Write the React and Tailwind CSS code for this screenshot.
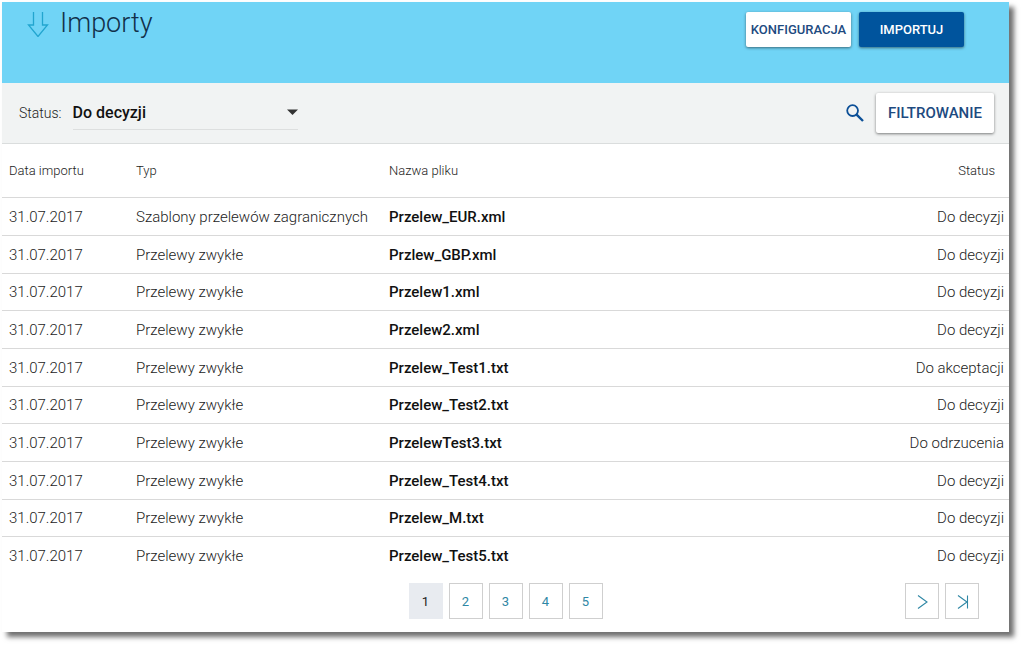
import React, { useState } from 'react';

const imports = [
  { date: '31.07.2017', type: 'Szablony przelewów zagranicznych', file: 'Przelew_EUR.xml', status: 'Do decyzji' },
  { date: '31.07.2017', type: 'Przelewy zwykłe', file: 'Przlew_GBP.xml', status: 'Do decyzji' },
  { date: '31.07.2017', type: 'Przelewy zwykłe', file: 'Przelew1.xml', status: 'Do decyzji' },
  { date: '31.07.2017', type: 'Przelewy zwykłe', file: 'Przelew2.xml', status: 'Do decyzji' },
  { date: '31.07.2017', type: 'Przelewy zwykłe', file: 'Przelew_Test1.txt', status: 'Do akceptacji' },
  { date: '31.07.2017', type: 'Przelewy zwykłe', file: 'Przelew_Test2.txt', status: 'Do decyzji' },
  { date: '31.07.2017', type: 'Przelewy zwykłe', file: 'PrzelewTest3.txt', status: 'Do odrzucenia' },
  { date: '31.07.2017', type: 'Przelewy zwykłe', file: 'Przelew_Test4.txt', status: 'Do decyzji' },
  { date: '31.07.2017', type: 'Przelewy zwykłe', file: 'Przelew_M.txt', status: 'Do decyzji' },
  { date: '31.07.2017', type: 'Przelewy zwykłe', file: 'Przelew_Test5.txt', status: 'Do decyzji' },
];

const pages = [1, 2, 3, 4, 5];

const PageButton = ({ active, children, ...props }) => (
  <button
    className={`flex h-9 w-[34px] items-center justify-center border pt-[2px] text-[13px] ${
      active ? 'border-[#e8ebf0] bg-[#e8ebf0] text-[#222]' : 'border-[#cfcfcf] bg-white text-[#2f87a5]'
    }`}
    {...props}
  >
    {children}
  </button>
);

const Header = () => (
  <header className="flex h-[81px] items-start justify-between bg-[#70d4f6] pr-[45px] pl-6">
    <div className="flex items-center gap-[10px] pt-[3px]">
      <svg className="h-7 w-6" viewBox="0 0 24 28" fill="none" stroke="#22a5cf" strokeWidth="1.3">
        <path d="M7.5 3v13H2.5L12 27.5 21.5 16H16.5V3" />
      </svg>
      <h1 className="text-[27px] leading-9 font-light text-[#12304a]">Importy</h1>
    </div>
    <div className="flex gap-2 pt-[10px]">
      <button className="h-[35px] w-[105px] rounded-xs bg-white text-[13px] font-medium text-[#1d4a80] shadow-[0_1px_3px_#00000080]">
        KONFIGURACJA
      </button>
      <button className="h-[35px] w-[105px] rounded-xs bg-[#00549d] text-[13px] font-medium text-white shadow-[0_1px_3px_#00000080]">
        IMPORTUJ
      </button>
    </div>
  </header>
);

const FilterBar = () => (
  <div className="flex h-[61px] items-center justify-between border-b border-[#dadddd] bg-[#f1f3f3] pr-[15px] pl-[17px]">
    <div className="flex items-center gap-[11px]">
      <label htmlFor="status" className="text-sm font-light text-[#222]">Status:</label>
      <div className="relative w-[225px] border-b border-[#dddfdf]">
        <select id="status" defaultValue="Do decyzji" className="h-8 w-full appearance-none bg-transparent text-base font-medium text-[#111]">
          <option>Do decyzji</option>
          <option>Do akceptacji</option>
          <option>Do odrzucenia</option>
        </select>
        <svg className="pointer-events-none absolute top-3 right-0 h-[6px] w-[11px]" viewBox="0 0 11 6" fill="#333">
          <path d="M0 0.5h11L5.5 6z" />
        </svg>
      </div>
    </div>
    <div className="flex items-center gap-3">
      <button aria-label="Szukaj">
        <svg className="h-[18px] w-[18px]" viewBox="0 0 18 18" fill="none" stroke="#0c4f97" strokeWidth="1.8">
          <circle cx="6.6" cy="6.6" r="5.4" />
          <path d="M10.6 10.6l6.4 6.4" strokeWidth="2.4" />
        </svg>
      </button>
      <button className="h-10 w-[118px] rounded-xs bg-white text-[15px] font-medium text-[#1d4a80] shadow-[0_1px_3px_#00000080]">
        FILTROWANIE
      </button>
    </div>
  </div>
);

const ImportsTable = () => (
  <table className="w-full table-fixed text-left text-[#1c1c1c]">
    <colgroup>
      <col className="w-[134px]" />
      <col className="w-[253px]" />
      <col />
      <col className="w-[160px]" />
    </colgroup>
    <thead>
      <tr className="h-[53px] border-b border-[#d9d9d9] text-[13px]">
        <th className="pl-[7px] font-light">Data importu</th>
        <th className="font-light">Typ</th>
        <th className="font-light">Nazwa pliku</th>
        <th className="pr-[14px] text-right font-light">Status</th>
      </tr>
    </thead>
    <tbody>
      {imports.map((item) => (
        <tr key={item.file} className="h-[38px] border-b border-[#d9d9d9] text-[15px] font-light last:border-0 nth-[3n]:h-[37px]">
          <td className="pt-[2px] pl-[7px]">{item.date}</td>
          <td className="pt-[2px] whitespace-nowrap">{item.type}</td>
          <td className="pt-[2px] font-medium text-[#111]">{item.file}</td>
          <td className="pt-[2px] pr-[5px] text-right">{item.status}</td>
        </tr>
      ))}
    </tbody>
  </table>
);

const Pagination = () => {
  const [page, setPage] = useState(1);

  return (
    <nav className="grid grid-cols-[1fr_auto_1fr] pt-[9px] pb-[13px]">
      <div />
      <div className="flex gap-[6px]">
        {pages.map((p) => (
          <PageButton key={p} active={p === page} onClick={() => setPage(p)}>
            {p}
          </PageButton>
        ))}
      </div>
      <div className="flex justify-end gap-[6px] pr-[30px]">
        <PageButton aria-label="Następna" onClick={() => setPage(Math.min(page + 1, pages.length))}>
          <svg className="h-[14px] w-[14px]" viewBox="0 0 14 14" fill="none" stroke="currentColor" strokeWidth="1.1">
            <path d="M3 0.5L12 7 3 13.5" />
          </svg>
        </PageButton>
        <PageButton aria-label="Ostatnia" onClick={() => setPage(pages.length)}>
          <svg className="h-[14px] w-[14px]" viewBox="0 0 14 14" fill="none" stroke="currentColor" strokeWidth="1.1">
            <path d="M3 0.5L12 7 3 13.5M12.5 0.5v13" />
          </svg>
        </PageButton>
      </div>
    </nav>
  );
};

const App = () => (
  <div className="bg-white pt-[2px] pr-[15px] pb-[18px] pl-[2px] font-[Roboto,sans-serif]">
    <main className="bg-white shadow-[5px_5px_5px_#00000090]">
      <Header />
      <FilterBar />
      <ImportsTable />
      <Pagination />
    </main>
  </div>
);

export default App;
